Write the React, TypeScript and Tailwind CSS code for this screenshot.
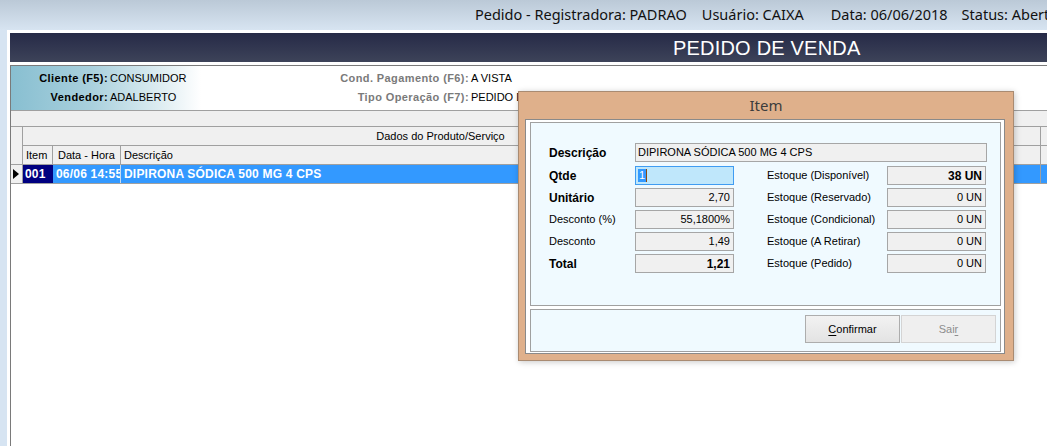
import React from "react";

const fieldCls =
  "h-[19px] border border-[#a6a6a6] bg-[#f0f0f0] flex items-center justify-end pr-[3px] text-[11px] leading-none text-black";

function Row({
  label,
  bold,
  value,
  valueBold,
  stockLabel,
  stockValue,
  stockBold,
  qtde,
}: {
  label: string;
  bold?: boolean;
  value: string;
  valueBold?: boolean;
  stockLabel: string;
  stockValue: string;
  stockBold?: boolean;
  qtde?: boolean;
}) {
  return (
    <div className="flex items-center h-[19px] mb-[3px]">
      <div
        className={
          "w-[86px] " + (bold ? "font-bold text-[12px]" : "text-[11px]")
        }
      >
        {label}
      </div>
      {qtde ? (
        <div className="w-[99px] h-[19px] border border-[#3f9cf2] bg-[#bfe7fb] flex items-center pl-[2px] text-[11px] leading-none">
          <span className="bg-[#3399ff] text-white px-[1px] leading-[13px]">1</span>
          <span className="w-[1px] h-[13px] bg-[#8a4a10]" />
        </div>
      ) : (
        <div className={"w-[99px] " + fieldCls + (valueBold ? " font-bold text-[12px]" : "")}>
          {value}
        </div>
      )}
      <div className="ml-[33px] w-[120px] text-[11px]">{stockLabel}</div>
      <div className={"w-[99px] " + fieldCls + (stockBold ? " font-bold text-[12px]" : "")}>
        {stockValue}
      </div>
    </div>
  );
}

export default function App() {
  return (
    <div className="relative w-[1047px] h-[446px] overflow-hidden bg-[#d6e4f2] font-['Liberation_Sans',Arial,sans-serif] text-black">
      {/* top bar */}
      <div className="h-[30px] bg-[linear-gradient(to_bottom,#bbc9d7,#d7e4f1)] flex items-center pl-[475px] whitespace-nowrap font-['Noto_Sans',sans-serif] text-[14.5px] text-[#111]">
        <span>Pedido - Registradora: PADRAO</span>
        <span className="ml-[15px]">Usuário: CAIXA</span>
        <span className="ml-[27px]">Data: 06/06/2018</span>
        <span className="ml-[14px]">Status: Aberto</span>
      </div>

      <div className="flex h-[416px]">
        <div className="w-[7px] shrink-0" />
        <div className="flex-1 bg-white pt-[3px] pl-[3px] flex flex-col min-w-0">
          {/* header */}
          <div className="h-[29px] shrink-0 bg-[linear-gradient(to_bottom,#262a47,#3d4359)] flex items-center pl-[663px] whitespace-nowrap">
            <span className="text-white text-[20px] font-['Liberation_Sans',Arial,sans-serif] tracking-[0.2px]">
              PEDIDO DE VENDA
            </span>
          </div>
          <div className="h-[3px] shrink-0" />

          <div className="flex-1 border-l border-t border-[#7a7a7a] flex flex-col">
            {/* info panel */}
            <div className="h-[44px] shrink-0 pt-[3px] bg-[linear-gradient(to_right,#88bfd1_0px,#a9d0dd_80px,#e2eff3_155px,#ffffff_190px)] text-[11px] whitespace-nowrap">
              <div className="flex items-center h-[19px]">
                <div className="w-[97px] text-right font-bold tracking-[0.4px]">Cliente (F5):</div>
                <div className="ml-[2px] w-[200px]">CONSUMIDOR</div>
                <div className="w-[159px] text-right font-bold text-[#7a7a7a] tracking-[0.4px]">Cond. Pagamento (F6):</div>
                <div className="ml-[2px]">A VISTA</div>
              </div>
              <div className="flex items-center h-[19px]">
                <div className="w-[97px] text-right font-bold tracking-[0.4px]">Vendedor:</div>
                <div className="ml-[2px] w-[200px]">ADALBERTO</div>
                <div className="w-[159px] text-right font-bold text-[#7a7a7a] tracking-[0.4px]">Tipo Operação (F7):</div>
                <div className="ml-[2px]">PEDIDO DE VENDA</div>
              </div>
            </div>

            {/* toolbar strip */}
            <div className="h-[17px] shrink-0 border-t border-b border-[#a0a0a0] bg-[#f0f0f0]" />

            {/* grid */}
            <div className="flex text-[11px] whitespace-nowrap">
              <div className="w-[12px] shrink-0 flex flex-col border-r border-[#a0a0a0] bg-[#f0f0f0]">
                <div className="h-[38px] border-b border-[#a0a0a0]" />
                <div className="h-[19px] border-b border-[#a0a0a0] flex items-center pl-[2px]">
                  <svg width="6" height="10" viewBox="0 0 6 10">
                    <polygon points="0,0 6,5 0,10" fill="#000" />
                  </svg>
                </div>
              </div>
              <div className="flex-1 flex flex-col min-w-0">
                <div className="h-[19px] flex border-b border-[#a0a0a0] bg-[#f0f0f0]">
                  <div className="w-[835px] shrink-0 flex items-center justify-center">
                    Dados do Produto/Serviço
                  </div>
                  <div className="w-[182px] shrink-0 border-l border-[#a0a0a0]" />
                  <div className="flex-1 border-l border-[#a0a0a0]" />
                </div>
                <div className="h-[19px] flex border-b border-[#a0a0a0] bg-[#f0f0f0]">
                  <div className="w-[30px] shrink-0 border-r border-[#a0a0a0] flex items-center pl-[3px]">Item</div>
                  <div className="w-[68px] shrink-0 border-r border-[#a0a0a0] flex items-center pl-[5px]">Data - Hora</div>
                  <div className="w-[919px] shrink-0 flex items-center pl-[3px]">Descrição</div>
                  <div className="flex-1 border-l border-[#a0a0a0]" />
                </div>
                <div className="h-[19px] flex border-b border-[#a0a0a0] bg-[#3399ff] text-white font-bold text-[12px] tracking-[0.2px]">
                  <div className="w-[30px] shrink-0 bg-[#000080] flex items-center pl-[2px]">001</div>
                  <div className="w-[68px] shrink-0 border-r border-[#c8dcf0] flex items-center pl-[3px] overflow-hidden">06/06 14:55</div>
                  <div className="w-[919px] shrink-0 flex items-center pl-[3px]">DIPIRONA SÓDICA 500 MG 4 CPS</div>
                  <div className="flex-1 border-l border-[#a0a0a0]" />
                </div>
              </div>
            </div>
            <div className="flex-1 bg-white" />
          </div>
        </div>
      </div>

      {/* dialog */}
      <div className="absolute left-[518px] top-[91px] w-[496px] h-[270px] bg-[#dfb08b] border border-[#a98b72] shadow-[1px_1px_6px_rgba(0,0,0,0.22)] flex flex-col">
        <div className="h-[27px] shrink-0 flex items-center justify-center font-['Noto_Sans',sans-serif] text-[15px] text-[#3c3c3c]">
          Item
        </div>
        <div className="ml-[6px] w-[480px] h-[235px] border border-[#8a8a8a] bg-white pt-[2px] pl-[4px] pr-[3px] pb-[1px] flex flex-col gap-[3px]">
          <div className="h-[184px] border border-[#a0a0a0] bg-[#f0faff] pt-[20px] pl-[18px] whitespace-nowrap">
            <div className="flex items-center h-[19px] mb-[4px]">
              <div className="w-[86px] font-bold text-[12px]">Descrição</div>
              <div className="w-[352px] h-[19px] border border-[#a6a6a6] bg-[#f0f0f0] flex items-center pl-[2px] text-[11px] leading-none">
                DIPIRONA SÓDICA 500 MG 4 CPS
              </div>
            </div>
            <Row label="Qtde" bold value="1" qtde stockLabel="Estoque (Disponível)" stockValue="38 UN" stockBold />
            <Row label="Unitário" bold value="2,70" stockLabel="Estoque (Reservado)" stockValue="0 UN" />
            <Row label="Desconto (%)" value="55,1800%" stockLabel="Estoque (Condicional)" stockValue="0 UN" />
            <Row label="Desconto" value="1,49" stockLabel="Estoque (A Retirar)" stockValue="0 UN" />
            <Row label="Total" bold value="1,21" valueBold stockLabel="Estoque (Pedido)" stockValue="0 UN" />
          </div>
          <div className="h-[43px] border border-[#a0a0a0] bg-[#f0faff] flex justify-end items-start pt-[5px] pr-[4px] gap-[1px]">
            <button className="w-[95px] h-[28px] border border-[#adadad] bg-[linear-gradient(to_bottom,#f2f2f2,#e3e3e3)] text-[11px] text-black">
              <span className="underline underline-offset-2">C</span>onfirmar
            </button>
            <button className="w-[95px] h-[28px] border border-[#d4d4d4] bg-[#efefef] text-[11px] text-[#8d8d8d]">
              Sai<span className="underline underline-offset-2">r</span>
            </button>
          </div>
        </div>
      </div>
    </div>
  );
}
